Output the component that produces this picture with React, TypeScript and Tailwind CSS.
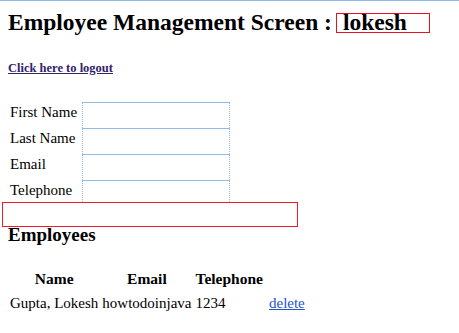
import React from "react";

const inputCls =
  "block w-[148px] border-t border-x border-b-0 border-[#8fbde6] [border-style:solid_dotted_none_dotted] bg-white outline-none";

function Row({ label, last }: { label: string; last?: boolean }) {
  return (
    <div className={`grid grid-cols-[74px_148px] ${last ? "h-[22px]" : "h-[26px]"}`}>
      <div className="pl-[2px] pt-[1px] leading-[18px]">{label}</div>
      <input className={`${inputCls} ${last ? "h-[22px]" : "h-[26px]"}`} />
    </div>
  );
}

export default function App() {
  return (
    <div className="min-h-[333px] w-[459px] border-t border-[#8cbbe3] bg-white font-['Liberation_Serif',serif] text-[15px] text-black">
      <h1 className="ml-[8px] mt-[8px] whitespace-nowrap text-[23.5px] font-bold leading-[27px]">
        Employee Management Screen :
        <span className="ml-[4px] inline-block h-[20px] w-[94px] border border-[#e81123] pl-[6px] align-baseline leading-[16px]">
          lokesh
        </span>
      </h1>
      <a
        href="#"
        className="ml-[8px] mt-[25px] block w-fit text-[12.5px] font-bold leading-[14px] text-[#33226b] underline"
      >
        Click here to logout
      </a>
      <form className="ml-[8px] mt-[27px]">
        <Row label="First Name" />
        <Row label="Last Name" />
        <Row label="Email" />
        <Row label="Telephone" last />
      </form>
      <div className="ml-[2px] h-[25px] w-[296px] border border-[#ee1c25]" />
      <h2 className="ml-[8px] mt-[1px] text-[19px] font-bold leading-[14px]">Employees</h2>
      <table className="ml-[7px] mt-[24px] border-separate border-spacing-[2px] leading-[20px]">
        <thead>
          <tr>
            <th className="p-[1px] text-[15.5px] font-bold">Name</th>
            <th className="p-[1px] text-[15.5px] font-bold">Email</th>
            <th className="p-[1px] text-[15.5px] font-bold">Telephone</th>
            <th className="p-[1px]"></th>
          </tr>
        </thead>
        <tbody>
          <tr>
            <td className="p-[1px]">Gupta, Lokesh</td>
            <td className="p-[1px]">howtodoinjava</td>
            <td className="p-[1px]">1234</td>
            <td className="p-[1px] pl-[3px]">
              <a href="#" className="text-[#2255cc] underline">
                delete
              </a>
            </td>
          </tr>
        </tbody>
      </table>
    </div>
  );
}
